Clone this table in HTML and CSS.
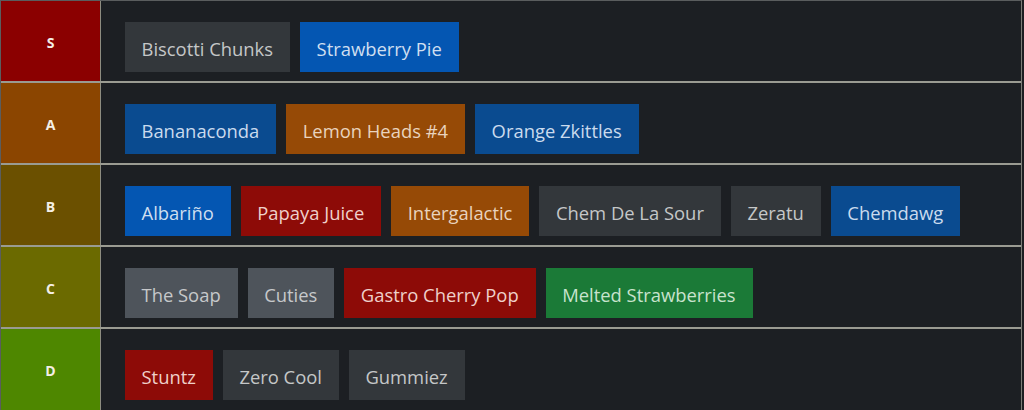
FILE: index.html
```html
<!DOCTYPE html>
<html>
<head>
<meta charset="utf-8">
<link rel="stylesheet" href="styles.css">
</head>
<body>
<div class="tiers">
  <div class="row">
    <div class="label t-s">S</div>
    <div class="items">
      <span class="tag grey">Biscotti Chunks</span>
      <span class="tag blue">Strawberry Pie</span>
    </div>
  </div>
  <div class="row">
    <div class="label t-a">A</div>
    <div class="items">
      <span class="tag navy">Bananaconda</span>
      <span class="tag orange">Lemon Heads #4</span>
      <span class="tag navy">Orange Zkittles</span>
    </div>
  </div>
  <div class="row">
    <div class="label t-b">B</div>
    <div class="items">
      <span class="tag blue">Albariño</span>
      <span class="tag red">Papaya Juice</span>
      <span class="tag orange">Intergalactic</span>
      <span class="tag grey">Chem De La Sour</span>
      <span class="tag grey">Zeratu</span>
      <span class="tag navy">Chemdawg</span>
    </div>
  </div>
  <div class="row">
    <div class="label t-c">C</div>
    <div class="items">
      <span class="tag slate">The Soap</span>
      <span class="tag slate">Cuties</span>
      <span class="tag red">Gastro Cherry Pop</span>
      <span class="tag green">Melted Strawberries</span>
    </div>
  </div>
  <div class="row last">
    <div class="label t-d">D</div>
    <div class="items">
      <span class="tag red">Stuntz</span>
      <span class="tag grey">Zero Cool</span>
      <span class="tag grey">Gummiez</span>
    </div>
  </div>
</div>
</body>
</html>
```

FILE: styles.css
```css
html, body {
  margin: 0;
  padding: 0;
  background: #1c1e22;
}
.tiers {
  width: 1022px;
  border: 1px solid #5a5d5e;
  border-right: 1px solid #7c7e78;
  box-sizing: border-box;
  font-family: "Open Sans", "Noto Sans", sans-serif;
}
.row {
  display: flex;
  height: 82px;
  border-bottom: 2px solid #9a9b92;
  box-sizing: border-box;
}
.row.last {
  border-bottom: none;
  height: 81px;
}
.label {
  width: 100px;
  flex: none;
  border-right: 1px solid #8d8c80;
  display: flex;
  align-items: center;
  justify-content: center;
  color: #f4efe6;
  font-weight: 700;
  font-size: 14px;
  padding-top: 2px;
  box-sizing: border-box;
}
.t-s { background: #8b0000; }
.t-a { background: #8b4500; }
.t-b { background: #6b5000; }
.t-c { background: #6b6a00; }
.t-d { background: #4e8700; }
.items {
  flex: 1;
  display: flex;
  flex-wrap: wrap;
  align-items: flex-start;
  gap: 10px;
  padding: 21px 24px 8px 24px;
  background: #1c1f23;
}
.tag {
  display: inline-block;
  height: 50px;
  line-height: 47px;
  padding: 3px 17px 0 16.5px;
  font-size: 18.4px;
  color: #c9cbcc;
  box-sizing: border-box;
}
.grey { background: #33373b; color: #c5c7c8; }
.slate { background: #4e545b; color: #c6c8ca; }
.blue { background: #0456b2; color: #cfdff0; }
.navy { background: #0a4b90; color: #cadbee; }
.orange { background: #964a06; color: #e9d3be; }
.red { background: #8d0b07; color: #efd0ca; }
.green { background: #1b7a37; color: #c8e3cd; }
```
